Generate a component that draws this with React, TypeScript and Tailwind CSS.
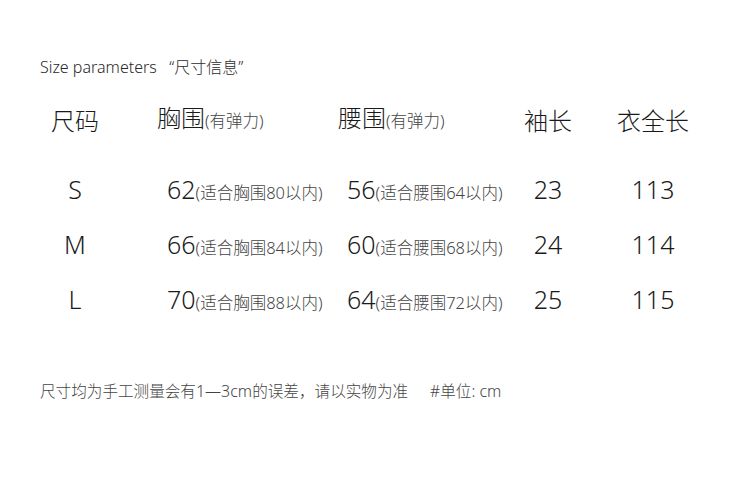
const FONT = { fontFamily: '"Noto Sans", "Noto Sans CJK SC", sans-serif' };

const rows = [
  { size: "S", bust: "62", bustNote: "(适合胸围80以内)", waist: "56", waistNote: "(适合腰围64以内)", sleeve: "23", length: "113" },
  { size: "M", bust: "66", bustNote: "(适合胸围84以内)", waist: "60", waistNote: "(适合腰围68以内)", sleeve: "24", length: "114" },
  { size: "L", bust: "70", bustNote: "(适合胸围88以内)", waist: "64", waistNote: "(适合腰围72以内)", sleeve: "25", length: "115" },
];

export default function App() {
  return (
    <div className="w-[750px] h-[483px] bg-white text-[#1a1a1a] font-light" style={FONT}>
      <div className="pt-[57px] pl-[40px] text-[16px] leading-[20px] text-[#2a2a2a] whitespace-pre">
        {"Size parameters   “尺寸信息”"}
      </div>

      {/* header */}
      <div className="mt-[28px] flex items-end h-[32px] text-[24px] leading-[32px]">
        <div className="ml-[40px] w-[70px] text-center">尺码</div>
        <div className="w-[220px] pl-[47px] whitespace-nowrap">
          胸围<span className="text-[16.5px] text-[#444]">(有弹力)</span>
        </div>
        <div className="w-[178px] pl-[8px] whitespace-nowrap">
          腰围<span className="text-[16.5px] text-[#444]">(有弹力)</span>
        </div>
        <div className="w-[80px] text-center">袖长</div>
        <div className="w-[130px] text-center">衣全长</div>
      </div>

      {/* rows */}
      <div className="mt-[25px]">
        {rows.map((r) => (
          <div key={r.size} className="flex items-center h-[55px] text-[25px]">
            <div className="ml-[40px] w-[70px] text-center">{r.size}</div>
            <div className="w-[220px] pl-[57px] whitespace-nowrap">
              {r.bust}
              <span className="text-[16.5px] text-[#444]">{r.bustNote}</span>
            </div>
            <div className="w-[178px] pl-[17px] whitespace-nowrap">
              {r.waist}
              <span className="text-[16.5px] text-[#444]">{r.waistNote}</span>
            </div>
            <div className="w-[80px] text-center">{r.sleeve}</div>
            <div className="w-[130px] text-center">{r.length}</div>
          </div>
        ))}
      </div>

      <div className="mt-[54px] pl-[40px] flex items-baseline text-[15.6px] leading-[20px] text-[#444] whitespace-nowrap">
        <span>
          尺寸均为手工测量会有<span className="text-[16px]">1—3cm</span>的误差，请以实物为准
        </span>
        <span className="ml-[22px]">
          #单位<span className="text-[16px]">: cm</span>
        </span>
      </div>
    </div>
  );
}
